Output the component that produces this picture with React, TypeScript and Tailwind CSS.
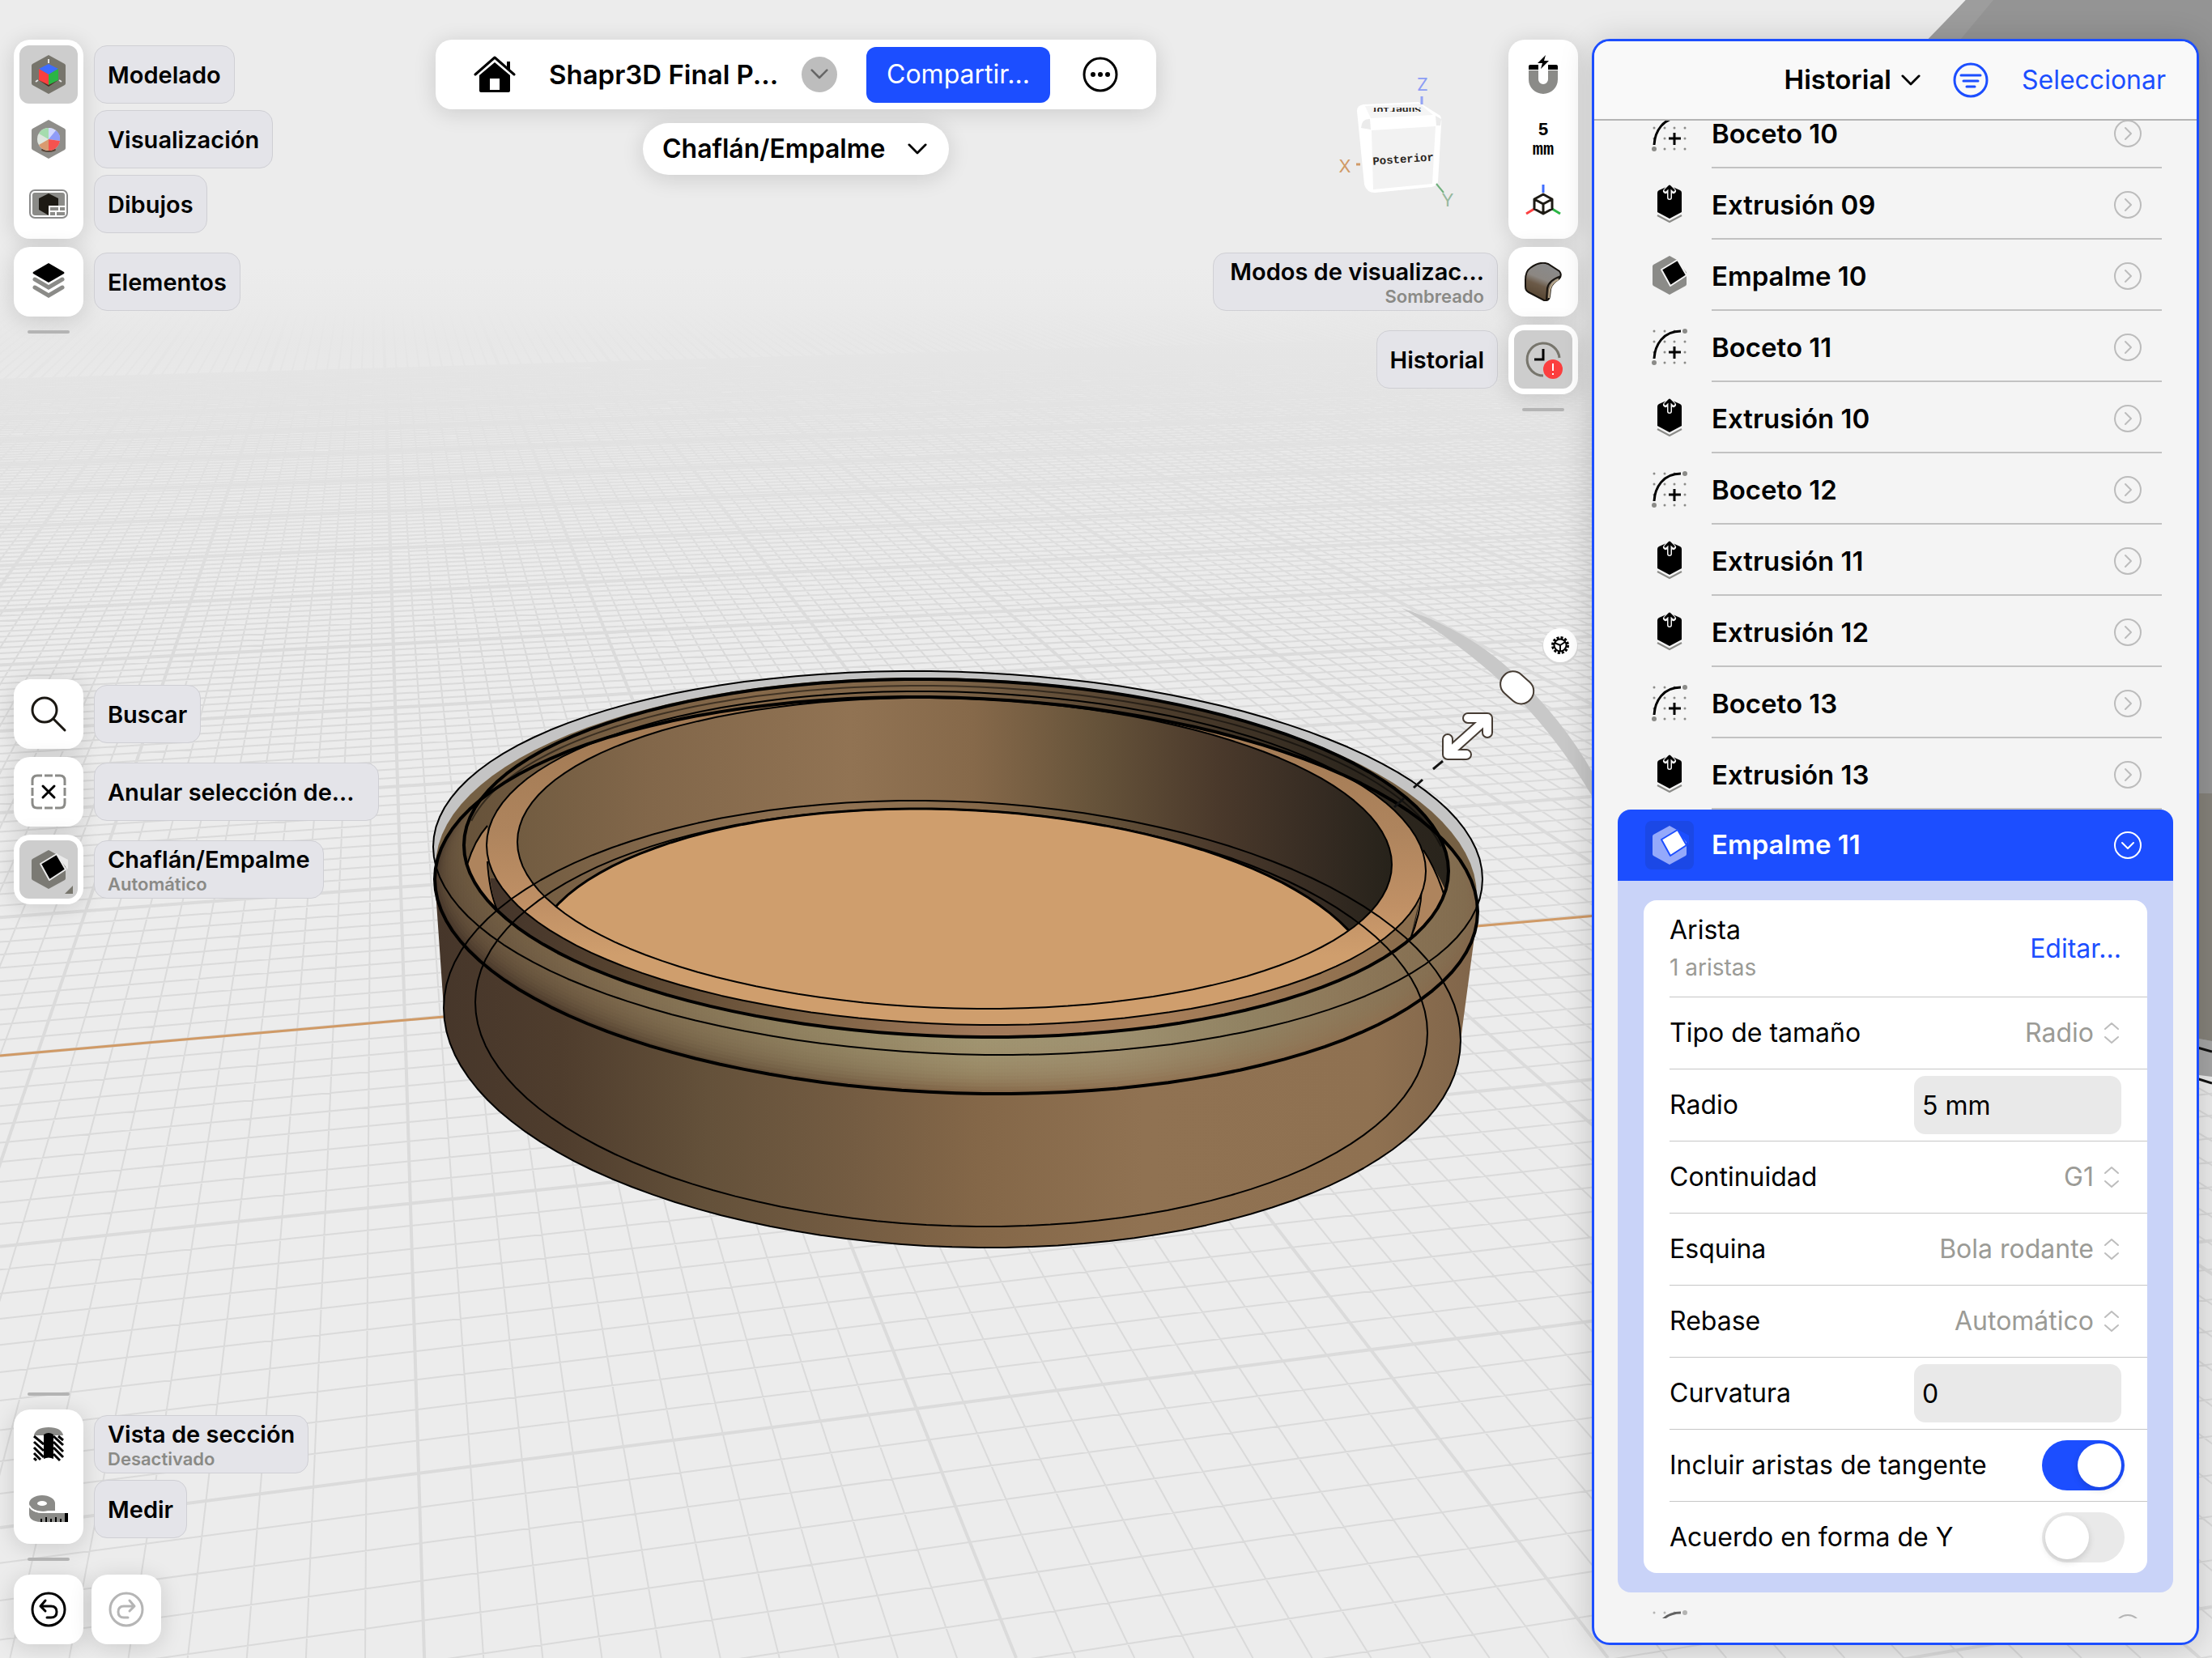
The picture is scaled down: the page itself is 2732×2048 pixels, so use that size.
import React, { useState } from 'react';
import clsx from 'clsx';

/* ---------- ground grid ---------- */

// Two vanishing points and the origin of the ground plane, in canvas units.
const STEEP_VP = { x: 463.5, y: 70 };
const FLAT_VP = { x: 14000, y: 70 };
const ORIGIN = { x: 1131.8, y: 1740 };
const U_STEP = 0.004559;
const V_STEP = 0.02246;
const CANVAS_W = 2732;
const CANVAS_H = 2048;
const FOG_Y = 330;

function steepLine(u: number) {
  const w = 1 + u * U_STEP;
  const px = (ORIGIN.x + u * U_STEP * FLAT_VP.x) / w;
  const py = (ORIGIN.y + u * U_STEP * FLAT_VP.y) / w;
  const at = (y: number) => STEEP_VP.x + ((px - STEEP_VP.x) * (y - STEEP_VP.y)) / (py - STEEP_VP.y);
  return `M${at(FOG_Y).toFixed(1)} ${FOG_Y}L${at(CANVAS_H).toFixed(1)} ${CANVAS_H}`;
}

function flatLine(v: number) {
  const w = 1 + v * V_STEP;
  const px = (ORIGIN.x + v * V_STEP * STEEP_VP.x) / w;
  const py = (ORIGIN.y + v * V_STEP * STEEP_VP.y) / w;
  const slope = (FLAT_VP.y - py) / (FLAT_VP.x - px);
  const at = (x: number) => py + slope * (x - px);
  return `M0 ${at(0).toFixed(1)}L${CANVAS_W} ${at(CANVAS_W).toFixed(1)}`;
}

function range(from: number, to: number) {
  return Array.from({ length: to - from + 1 }, (_, i) => from + i);
}

const minorGrid = [
...range(-170, 260).filter((u) => u % 10 !== 0).map(steepLine),
...range(-18, 150).filter((v) => v % 10 !== 0).map(flatLine)].
join('');
const majorGrid = [
...range(-17, 26).map((u) => steepLine(u * 10)),
...range(-1, 15).map((v) => flatLine(v * 10))].
join('');

/* ---------- model ---------- */

// cx, cy, half width, half height, drop of the rightmost point
type Ring = [number, number, number, number, number];

const TOP_OUTER: Ring = [1183, 1066, 648, 237, 20];
const FILLET_BACK: Ring = [1181, 1088, 643, 251, 18];
const FILLET_LOW: Ring = [1181, 1106, 644, 245, 20];
const FILLET_HIGH: Ring = [1181, 1060, 608, 221, 16];
const LEDGE_OUT: Ring = [1181, 1060, 580, 206, 16];
const LEDGE_IN: Ring = [1179, 1054, 540, 192, 14];
const FLOOR: Ring = [1178, 1206, 522, 207, 18];
const BASE_OUT: Ring = [1176, 1265, 628, 276, 20];
const BASE_IN: Ring = [1175, 1257, 588, 258, 19];

function arc([cx, cy, a, b, s]: Ring, from = 0, to = 360) {
  const r = Math.sqrt(b * b - s * s);
  const steps = 120;
  return Array.from({ length: steps + 1 }, (_, i) => {
    const t = ((from + ((to - from) * i) / steps) * Math.PI) / 180;
    const x = cx + a * Math.cos(t);
    const y = cy + s * Math.cos(t) + r * Math.sin(t);
    return `${x.toFixed(1)} ${y.toFixed(1)}`;
  }).join('L');
}

const ring = (r: Ring) => `M${arc(r)}Z`;

const mix = (a: Ring, b: Ring, t: number) => a.map((n, i) => n + (b[i] - n) * t) as Ring;

const filletSteps = range(1, 14).map((i) => ring(mix(FILLET_LOW, FILLET_HIGH, i / 16)));

function Stops({ list }: {list: [number, string][];}) {
  return (
    <>
      {list.map(([at, color]) =>
      <stop key={at} offset={at} stopColor={color} />
      )}
    </>);

}

function Scene() {
  return (
    <svg
      className="absolute inset-0 h-full w-full"
      viewBox="0 0 2732 2048"
      preserveAspectRatio="xMidYMid slice"
      aria-hidden="true">
      
      <defs>
        <linearGradient id="fog" x1="0" y1="330" x2="0" y2="800" gradientUnits="userSpaceOnUse">
          <stop offset="0" stopColor="#ececec" />
          <stop offset="0.1" stopColor="#eaeaea" />
          <stop offset="0.2" stopColor="#e7e7e7" stopOpacity="0.9" />
          <stop offset="0.45" stopColor="#e8e8e8" stopOpacity="0.5" />
          <stop offset="1" stopColor="#ececec" stopOpacity="0" />
        </linearGradient>
        <linearGradient id="wall" x1="540" x2="1825" y1="0" y2="0" gradientUnits="userSpaceOnUse">
          <Stops list={[[0, '#46362a'], [0.12, '#4f3d2d'], [0.26, '#64513a'], [0.4, '#745c42'], [0.52, '#846748'], [0.68, '#907252'], [0.9, '#8f7151'], [1, '#80654a']]} />
        </linearGradient>
        <linearGradient id="glow" x1="540" x2="1825" y1="0" y2="0" gradientUnits="userSpaceOnUse">
          <Stops list={[[0, '#6a563e'], [0.16, '#806b4e'], [0.35, '#928462'], [0.52, '#a29672'], [0.65, '#a09372'], [0.8, '#918262'], [1, '#7f6d50']]} />
        </linearGradient>
        <linearGradient id="upper" x1="570" x2="1790" y1="0" y2="0" gradientUnits="userSpaceOnUse">
          <Stops list={[[0, '#66523a'], [0.3, '#86694a'], [0.5, '#7c6347'], [0.7, '#4e3e2d'], [0.9, '#2e271e'], [1, '#29241c']]} />
        </linearGradient>
        <linearGradient id="band" x1="600" x2="1770" y1="0" y2="0" gradientUnits="userSpaceOnUse">
          <Stops list={[[0, '#43342a'], [0.15, '#57432f'], [0.35, '#7d6245'], [0.52, '#a0785a'], [0.7, '#a87f5a'], [1, '#876b4b']]} />
        </linearGradient>
        <linearGradient id="ledge" x1="0" x2="0" y1="870" y2="1180" gradientUnits="userSpaceOnUse">
          <Stops list={[[0, '#a07852'], [0.5, '#ae845d'], [0.8, '#c09065'], [1, '#cf9e6d']]} />
        </linearGradient>
        <linearGradient id="inner" x1="640" x2="1720" y1="0" y2="0" gradientUnits="userSpaceOnUse">
          <Stops list={[[0, '#725c41'], [0.15, '#82674a'], [0.38, '#917353'], [0.52, '#86694a'], [0.66, '#66533a'], [0.8, '#4a392b'], [0.92, '#352b22'], [1, '#26221a']]} />
        </linearGradient>
        <clipPath id="inFillet"><path d={ring(FILLET_LOW)} /></clipPath>
        <clipPath id="inTop"><path d={ring(FILLET_HIGH)} /></clipPath>
        <clipPath id="inLedge"><path d={ring(LEDGE_IN)} /></clipPath>
        <clipPath id="front"><path d="M590 1085 H1700 L1756 1100 L1741 1162 V1335 H590Z" /></clipPath>
        <clipPath id="cubeTop"><path d="M1690 133 H1762 V138 H1690Z" /></clipPath>
      </defs>

      <rect width="2732" height="2048" fill="#ececec" />
      <path d={minorGrid} stroke="#dadada" strokeWidth="2" fill="none" />
      <path d={majorGrid} stroke="#dbdbdb" strokeWidth="4" fill="none" />
      <rect y="320" width="2732" height="480" fill="url(#fog)" />
      <rect width="2732" height="330" fill="#ececec" />
      <path d="M0 1304 L548 1256 M1824 1144 L2732 1064" stroke="#d09a66" strokeWidth="3" />

      {/* part behind the history panel */}
      <path d="M2428 0 H2732 V1290 H2600 V60 H2372Z" fill="#949494" />
      <path d="M2428 0 H2462 L2412 60 H2370Z" fill="#9d9d9d" />
      <path d="M2700 980 H2732 V1286 L2700 1280Z" fill="#85827a" />
      <path d="M2700 1280 L2732 1286 V1330 L2700 1326Z" fill="#a5a5a5" />
      <path d="M2700 1290 L2732 1299 M2700 1328 L2732 1338" stroke="#111" strokeWidth="3" />

      {/* side wall */}
      <path d={`M1825 1127 L${arc(BASE_OUT, 0, 180)} L537 1086 Z`} fill="url(#wall)" />
      <path d={ring(TOP_OUTER)} fill="#c4c4c4" />
      <path d={ring(FILLET_BACK)} fill="#756044" />
      <path d={ring(FILLET_LOW)} fill="url(#wall)" />
      {filletSteps.map((d, i) =>
      <path key={i} d={d} fill="url(#glow)" opacity="0.18" />
      )}

      {/* recess */}
      <path d={ring(FILLET_HIGH)} fill="url(#upper)" />
      <g clipPath="url(#inTop)">
        <path d={ring(FILLET_HIGH)} fill="url(#band)" clipPath="url(#front)" />
        <path d="M577 1068 Q586 1038 602 1020 Q600 1080 614 1124 Q590 1100 577 1068Z" fill="#ae845d" />
        <path d="M1758 1050 Q1776 1078 1790 1110 L1741 1164 Q1756 1120 1758 1050Z" fill="#ae845d" />
        <path d="M577 1068 Q586 1038 602 1020 M1758 1050 Q1774 1075 1783 1104 M602 1064 Q604 1100 614 1124 M1756 1096 Q1755 1130 1741 1162" stroke="#000" strokeWidth="2" fill="none" />
      </g>
      <g clipPath="url(#inFillet)">
        <path d={ring(LEDGE_OUT)} fill="url(#ledge)" />
        <path d={ring(LEDGE_IN)} fill="url(#inner)" />
      </g>
      <g clipPath="url(#inLedge)">
        <path d={ring(FLOOR)} fill="#cf9e6d" stroke="#000" strokeWidth="3" />
      </g>

      {/* edges */}
      <g fill="none" stroke="#000" strokeLinejoin="round">
        <path d={ring(TOP_OUTER)} strokeWidth="2" />
        <path d={ring(FILLET_LOW)} strokeWidth="4" />
        <path d={ring(FILLET_HIGH)} strokeWidth="4" />
        <path d={`M${arc(FILLET_HIGH, 190, 350)}`} strokeWidth="2" transform="translate(0 8)" opacity="0.5" />
        <path d={ring(LEDGE_OUT)} strokeWidth="2" />
        <path d={ring(LEDGE_IN)} strokeWidth="2" />
        <path d={ring(BASE_OUT)} strokeWidth="2" />
        <path d={ring(BASE_IN)} strokeWidth="2" />
      </g>

      {/* radius manipulator */}
      <path
        d="M1731 751 Q1812 778 1866 828 Q1930 888 1968 956 V986 Q1918 902 1854 842 Q1796 790 1731 751Z"
        fill="#c8c8c8" />
      
      <path d="M1782 940 L1770 950 M1757 963 L1746 973 M1734 986 L1722 997" stroke="#111" strokeWidth="3" />
      <g fill="none" strokeLinecap="round" strokeLinejoin="round">
        <path d="M1813 887 H1837 V905 M1836 888 L1788 931 M1788 913 V932 H1811" stroke="#463c33" strokeWidth="14" />
        <path d="M1813 887 H1837 V905 M1836 888 L1788 931 M1788 913 V932 H1811" stroke="#fff" strokeWidth="10" />
      </g>
      <rect x="1852" y="834" width="44" height="31" rx="15" transform="rotate(42 1874 849)" fill="#fff" stroke="#463c33" strokeWidth="2" />
      <circle cx="1927" cy="799" r="22" fill="#d8d8d8" />
      <circle cx="1927" cy="797" r="21" fill="#fff" />
      <g fill="none" stroke="#000">
        <circle cx="1927" cy="797" r="9.5" strokeWidth="3" strokeDasharray="3 2" />
        <circle cx="1927" cy="797" r="7.5" strokeWidth="2" />
        <path d="M1927 797 L1920 794 M1927 797 L1933 793 M1927 797 L1927 804" strokeWidth="2" />
      </g>

      {/* orientation cube */}
      <path d="M1676 137 Q1676 130 1684 129 L1752 126 L1779 143 Q1781 147 1780 155 L1776 225 Q1774 230 1768 231 L1698 238 Q1688 238 1685 228Z" fill="#fff" />
      <path d="M1694 161 L1773 156 L1769 227 L1696 234Z" fill="#f2f2f2" />
      <path d="M1686 131 L1753 128 L1770 142 L1693 146Z" fill="#f5f5f5" />
      <path d="M1681 158 Q1682 146 1692 147 L1693 160Z M1773 143 L1780 147 L1779 155 H1774Z" fill="#ebebeb" />
      <path d="M1756 119 V129" stroke="#93a3f5" strokeWidth="3" />
      <path d="M1675 203 H1680" stroke="#d09a66" strokeWidth="3" />
      <path d="M1774 227 L1783 238" stroke="#6fb07c" strokeWidth="2" />
      <g className="font-[Inter,sans-serif]" fontSize="22" textAnchor="middle">
        <text x="1757" y="112" fill="#8c9df5">Z</text>
        <text x="1661" y="213" fill="#d09a66">X</text>
        <text x="1788" y="255" fill="#96b89c">Y</text>
      </g>
      <g className="font-['Liberation_Mono',monospace] font-bold" textAnchor="middle" fill="#2b2622">
        <text x="1733" y="201" fontSize="14" transform="rotate(-4 1733 196)">Posterior</text>
        <g clipPath="url(#cubeTop)">
          <text x="1724" y="140" fontSize="13" transform="rotate(178 1724 136)">Superior</text>
        </g>
      </g>
    </svg>);

}

/* ---------- icons ---------- */

type IconProps = {children: React.ReactNode;box?: string;className?: string;};

function Icon({ children, box = '0 0 48 48', className = 'size-12' }: IconProps) {
  return (
    <svg viewBox={box} className={className} fill="none" aria-hidden="true">
      {children}
    </svg>);

}

const HEX = 'M24 0 L44 11 Q45 12 45 13 V35 Q45 36 44 37 L24 48 L4 37 Q3 36 3 35 V13 Q3 12 4 11Z';

const ModelIcon = () =>
<Icon>
    <path d={HEX} fill="#77756c" />
    <path d="M12 31 L24 39 L36 31 L30 26 H18Z" fill="#4a2c22" />
    <path d="M24 11 L36 17 L24 24 L12 17Z" fill="#3f6dff" />
    <path d="M12 17 L24 24 V37 L12 31Z" fill="#fb3f3f" />
    <path d="M36 17 L24 24 V37 L36 31Z" fill="#2bb545" />
    <path d="M24 5 V10 M11 31 L8 33 M37 31 L40 33" stroke="#e3e3e3" strokeWidth="2" />
  </Icon>;


const VisualIcon = () =>
<Icon>
    <path d={HEX} fill="#8f8e8a" />
    <ellipse cx="24" cy="37" rx="9" ry="3" fill="#5a4436" />
    <circle cx="24" cy="24" r="14" fill="#dfe6df" />
    <path d="M24 24 L12 17 A14 14 0 0 1 24 10Z" fill="#a5dcae" />
    <path d="M24 24 V10 A14 14 0 0 1 33 13Z" fill="#d3d9ff" />
    <path d="M24 24 L33 13 A14 14 0 0 1 38 26Z" fill="#8f9cf8" />
    <path d="M24 24 L38 26 A14 14 0 0 1 24 38Z" fill="#f5534f" />
    <path d="M24 24 V38 A14 14 0 0 1 12 31Z" fill="#d99a70" />
  </Icon>;


const DrawingIcon = () =>
<Icon>
    <rect x="1" y="7" width="46" height="34" rx="6" stroke="#8b8b8b" strokeWidth="2" />
    <rect x="4" y="10" width="40" height="28" rx="3" fill="#8b8b88" />
    <path d="M24 11 L36 17 V31 L24 38 L12 31 V17Z" fill="#1d1a14" />
    <path d="M24 26 H44 V38 H24Z" fill="#fff" />
    <path d="M26 28 H36 V32 H26Z M38 28 H44 V32 H38Z M26 34 H32 V38 H26Z M34 34 H44 V38 H34Z" fill="#8b8b88" />
  </Icon>;


const LayersIcon = () =>
<Icon>
    <path d="M24 1 L43 12 Q44 13 43 14 L24 25 L5 14 Q4 13 5 12Z" fill="#000" />
    <path d="M7 21 L24 31 L41 21 M7 31 L24 41 L41 31" stroke="#8b8b88" strokeWidth="5" strokeLinecap="round" />
  </Icon>;


const SearchIcon = () =>
<Icon>
    <circle cx="19" cy="19" r="15" stroke="#1a1712" strokeWidth="3" />
    <path d="M30 30 L44 44" stroke="#1a1712" strokeWidth="3" strokeLinecap="round" />
  </Icon>;


const DeselectIcon = () =>
<Icon>
    <path d="M4 16 V10 Q4 4 10 4 H16 M19 4 H29 M32 4 H38 Q44 4 44 10 V16 M44 19 V29 M44 32 V38 Q44 44 38 44 H32 M29 44 H19 M16 44 H10 Q4 44 4 38 V32 M4 29 V19" stroke="#8b8b88" strokeWidth="3" />
    <path d="M17 17 L31 31 M31 17 L17 31" stroke="#000" strokeWidth="3" strokeLinecap="round" />
  </Icon>;


function FilletIcon({ hex = '#7b7a74', face = '#000', edge = '#e9e9e9', className = 'size-12' }) {
  return (
    <Icon className={className}>
      <path d={HEX} fill={hex} />
      <path d="M33 4 L48 12 V24 L38 12Z" fill={edge} />
      <path d="M14 17 L34 5 L45 24 L25 37Z" fill={face} stroke={edge} strokeWidth="2" strokeLinejoin="round" />
    </Icon>);

}

const SectionIcon = () =>
<Icon>
    <path d="M6 13 Q8 3 24 3 Q40 3 42 13Z" fill="#8b8b88" />
    <path d="M18 12 Q24 8 30 12 V42 Q24 39 18 42Z" fill="#000" />
    <path d="M6 14 L18 24 M6 21 L18 32 M6 28 L18 40 M6 35 L14 43 M6 41 L9 44 M30 14 L42 25 M30 21 L42 33 M30 28 L42 40 M30 36 L38 44 M36 14 L42 19" stroke="#000" strokeWidth="3" />
  </Icon>;


const MeasureIcon = () =>
<Icon>
    <ellipse cx="16" cy="17" rx="16" ry="10" fill="#8b8b88" />
    <path d="M16 17 H32 V26 H16Z" fill="#8b8b88" />
    <ellipse cx="16" cy="17" rx="6" ry="3" fill="#fff" />
    <path d="M0 20 Q3 29 18 29 H48 V40 H14 Q0 39 0 30Z" fill="#8b8b88" />
    <path d="M0 20 Q4 28 18 28 H33" stroke="#fff" strokeWidth="2" />
    <path d="M15 36 V40 M21 34 V40 M27 36 V40 M33 34 V40 M39 36 V40" stroke="#000" strokeWidth="2" />
    <path d="M44 29 H48 V40 H44Z" fill="#000" />
  </Icon>;


const UndoIcon = ({ flip = false, color = '#000' }) =>
<Icon>
    <g stroke={color} strokeLinecap="round" strokeLinejoin="round" transform={flip ? 'matrix(-1 0 0 1 48 0)' : undefined}>
      <circle cx="24" cy="24" r="20" strokeWidth="3" />
      <path d="M20 13 L14 20 L20 26 M14 20 H27 Q34 20 34 27 Q34 34 27 34 H22" strokeWidth="3" />
    </g>
  </Icon>;


const MagnetIcon = () =>
<Icon>
    <path d="M6 18 V14 Q6 12 8 12 H18 V18Z M30 18 V12 H40 Q42 12 42 14 V18Z" fill="#000" />
    <path d="M6 19 V30 A18 18 0 0 0 42 30 V19 H30 V30 A6 6 0 0 1 18 30 V19Z" fill="#8b8b88" />
    <path d="M27 0 L17 10 H23 L21 17 L31 7 H25Z" fill="#000" />
  </Icon>;


const AxesIcon = () =>
<Icon>
    <path d="M24 0 V10" stroke="#3f6dff" strokeWidth="3" />
    <path d="M13 30 L3 36" stroke="#fb3f3f" strokeWidth="3" />
    <path d="M35 30 L45 36" stroke="#2bb545" strokeWidth="3" />
    <path d="M24 12 L35 18 V30 L24 36 L13 30 V18Z M13 18 L24 24 L35 18 M24 24 V36" stroke="#1d1a14" strokeWidth="3" strokeLinejoin="round" />
  </Icon>;


const ShadingIcon = () =>
<Icon>
    <defs>
      <linearGradient id="shade" x1="28" y1="4" x2="12" y2="44" gradientUnits="userSpaceOnUse">
        <Stops list={[[0, '#8a8a8a'], [0.4, '#8c8782'], [0.6, '#6b5a48'], [1, '#54432f']]} />
      </linearGradient>
    </defs>
    <path d="M2 22 Q2 11 8 7 Q20 -2 30 2 L44 11 Q48 16 43 21 Q34 27 33 33 L32 42 Q31 48 25 47 L6 37 Q2 35 2 30Z" fill="url(#shade)" stroke="#17130e" strokeWidth="2" />
    <path d="M46 17 Q31 22 29 32 L28 46" stroke="#17130e" strokeWidth="2" />
    <path d="M43 21 Q34 25 32 34 L31 44" stroke="#b9a88c" strokeWidth="2" />
  </Icon>;


const HistoryIcon = () =>
<Icon>
    <path d="M24 44 A20 20 0 1 1 44 22" stroke="#77756c" strokeWidth="3" />
    <path d="M24 11 V24 H13" stroke="#000" strokeWidth="3" />
    <circle cx="36" cy="36" r="12" fill="#fb3f3f" />
    <path d="M36 29 V38 M36 41 V43" stroke="#fff" strokeWidth="2" />
  </Icon>;


const HomeIcon = () =>
<Icon box="0 0 52 48" className="h-12 w-13">
    <path d="M2 24 L26 3 L50 24" stroke="#000" strokeWidth="3" strokeLinecap="round" strokeLinejoin="round" />
    <path d="M41 8 H45 V19 L41 16Z" fill="#000" />
    <path d="M26 9 L45 25 V44 Q45 46 43 46 H32 V29 H20 V46 H9 Q7 46 7 44 V25Z" fill="#000" />
    <path d="M20 29 H32 V43 H20Z" fill="#fff" />
    <path d="M20 43 H32 V46 H20Z" fill="#000" />
  </Icon>;


function Chevron({ className }: {className: string;}) {
  return (
    <svg viewBox="0 0 26 16" className={className} fill="none" aria-hidden="true">
      <path d="M2 2 L13 13 L24 2" stroke="currentColor" strokeWidth="3" strokeLinecap="round" strokeLinejoin="round" />
    </svg>);

}

const SketchIcon = () =>
<Icon box="0 0 44 48" className="h-12 w-11">
    {[5, 18, 31, 44].map((y) =>
  [3, 16, 28, 41].map((x) => <circle key={`${x}-${y}`} cx={x} cy={y} r="1.5" fill="#8b8b88" />)
  )}
    <path d="M3 39 C4 22 14 5 36 5" stroke="#000" strokeWidth="3" />
    <circle cx="41" cy="5" r="3" fill="#8b8b88" />
    <circle cx="3" cy="44" r="3" fill="#8b8b88" />
    <path d="M28 24 V39 M21 31 H36" stroke="#000" strokeWidth="3" />
  </Icon>;


const ExtrudeIcon = () =>
<Icon box="0 0 44 48" className="h-12 w-11">
    <path d="M7 10 Q7 8 9 7 L18 3 H26 L35 7 Q37 8 37 10 V34 L22 42 L7 34Z" fill="#000" />
    <path d="M7 38 L22 46 L37 38" stroke="#8b8b88" strokeWidth="2" />
    <path d="M22 3 V16 M17 8 L22 2 L27 8" stroke="#f4f4f4" strokeWidth="6" strokeLinecap="round" strokeLinejoin="round" />
    <path d="M22 2 V16 M17 7 L22 2 L27 7" stroke="#000" strokeWidth="3" strokeLinecap="round" strokeLinejoin="round" />
  </Icon>;


function RoundChevron({ down = false, className }: {down?: boolean;className: string;}) {
  return (
    <svg viewBox="0 0 36 36" className={clsx('size-9', className)} fill="none" stroke="currentColor" aria-hidden="true">
      <circle cx="18" cy="18" r="16" strokeWidth="2" />
      <path d={down ? 'M11 15 L18 22 L25 15' : 'M15 11 L22 18 L15 25'} strokeWidth="2" strokeLinecap="round" strokeLinejoin="round" />
    </svg>);

}

/* ---------- toolbars ---------- */

type Tool = {
  name: string;
  icon: React.ReactNode;
  note?: string;
  active?: boolean;
  corner?: boolean;
  tag?: string;
  noTag?: boolean;
};

function ToolGroup({ tools, side = 'left' }: {tools: Tool[];side?: 'left' | 'right';}) {
  return (
    <div className={clsx('flex gap-[13px]', side === 'right' && 'flex-row-reverse')}>
      <div className="flex flex-col gap-2 rounded-[20px] bg-white p-[7px] shadow-[0_4px_28px_rgba(0,0,0,0.14)]">
        {tools.map((tool) =>
        <button
          key={tool.name}
          aria-label={tool.name}
          className={clsx('relative grid size-[72px] place-items-center rounded-xl', tool.active && 'bg-[#cdcdcd]')}>
          
            {tool.icon}
            {tool.corner &&
          <svg viewBox="0 0 10 10" className="absolute right-1.5 bottom-1.5 size-2.5" aria-hidden="true">
                <path d="M10 0 V10 H0Z" fill="#77756c" />
              </svg>
          }
          </button>
        )}
      </div>
      <div className={clsx('flex flex-col gap-2 py-[7px]', side === 'right' ? 'items-end text-right' : 'items-start')}>
        {tools.map((tool) => tool.noTag ? null :
        <div
          key={tool.name}
          className={clsx(
            'flex h-[72px] flex-col justify-center rounded-2xl border border-[#cfcfd4] bg-[#e4e4e9] px-4 pt-0.5 whitespace-nowrap',
            tool.tag
          )}>
          
            <span className="text-[29px] leading-[34px] font-semibold">{tool.name}</span>
            {tool.note && <span className="text-[22px] leading-[26px] font-semibold text-[#8a8a86]">{tool.note}</span>}
          </div>
        )}
      </div>
    </div>);

}

const Grip = () => <div className="mx-[17px] h-1 w-[52px] rounded-full bg-[#b4b4b4]" />;

function LeftTools() {
  return (
    <div className="flex flex-col gap-2.5">
      <ToolGroup
        tools={[
        { name: 'Modelado', icon: <ModelIcon />, active: true },
        { name: 'Visualización', icon: <VisualIcon /> },
        { name: 'Dibujos', icon: <DrawingIcon /> }]
        } />
      
      <ToolGroup tools={[{ name: 'Elementos', icon: <LayersIcon /> }]} />
      <div className="mt-[7px]"><Grip /></div>

      <div className="mt-[417px] flex flex-col gap-2.5">
        <ToolGroup tools={[{ name: 'Buscar', icon: <SearchIcon /> }]} />
        <ToolGroup tools={[{ name: 'Anular selección de...', icon: <DeselectIcon />, tag: 'w-[352px]' }]} />
        <ToolGroup
          tools={[{ name: 'Chaflán/Empalme', note: 'Automático', icon: <FilletIcon />, active: true, corner: true }]} />
        
      </div>

      <div className="mt-auto flex flex-col gap-[17px]">
        <Grip />
        <ToolGroup
          tools={[
          { name: 'Vista de sección', note: 'Desactivado', icon: <SectionIcon /> },
          { name: 'Medir', icon: <MeasureIcon /> }]
          } />
        
        <Grip />
        <div className="flex gap-2.5">
          <button aria-label="Deshacer" className="grid size-[86px] place-items-center rounded-[20px] bg-white shadow-[0_4px_28px_rgba(0,0,0,0.14)]">
            <UndoIcon />
          </button>
          <button aria-label="Rehacer" className="grid size-[86px] place-items-center rounded-[20px] bg-white shadow-[0_4px_28px_rgba(0,0,0,0.14)]">
            <UndoIcon flip color="#b5b5b5" />
          </button>
        </div>
      </div>
    </div>);

}

function RightTools() {
  return (
    <div className="flex flex-col items-end gap-2.5">
      <ToolGroup
        side="right"
        tools={[
        { name: 'Imán', icon: <MagnetIcon />, noTag: true },
        {
          name: 'Paso',
          noTag: true,
          icon:
          <span className="pt-1 text-center font-['Liberation_Mono',monospace] text-[22px] leading-6 font-bold">
                5<br />mm
              </span>

        },
        { name: 'Ejes', icon: <AxesIcon />, noTag: true }]
        } />
      
      <ToolGroup
        side="right"
        tools={[{ name: 'Modos de visualizac...', note: 'Sombreado', icon: <ShadingIcon />, tag: 'w-[352px]' }]} />
      
      <ToolGroup side="right" tools={[{ name: 'Historial', icon: <HistoryIcon />, active: true }]} />
      <div className="mt-[7px]"><Grip /></div>
    </div>);

}

function TopBar() {
  return (
    <header className="flex flex-col items-center gap-[17px]">
      <div className="flex h-[86px] w-[890px] items-center rounded-[20px] bg-white pr-[47px] pl-[47px] shadow-[0_4px_28px_rgba(0,0,0,0.14)]">
        <button aria-label="Inicio"><HomeIcon /></button>
        <h1 className="ml-[41px] text-[33px] leading-10 font-semibold whitespace-nowrap">Shapr3D Final P...</h1>
        <button aria-label="Opciones del diseño" className="ml-auto grid size-11 place-items-center rounded-full bg-[#bdbdbd] text-[#666]">
          <Chevron className="w-[22px]" />
        </button>
        <button className="ml-9 h-[69px] w-[227px] rounded-xl bg-[#1c4eff] text-[32px] text-white">Compartir...</button>
        <button aria-label="Más" className="ml-10">
          <Icon className="size-11" box="0 0 44 44">
            <circle cx="22" cy="22" r="20" stroke="#000" strokeWidth="3" />
            <circle cx="13" cy="22" r="3" fill="#000" />
            <circle cx="22" cy="22" r="3" fill="#000" />
            <circle cx="31" cy="22" r="3" fill="#000" />
          </Icon>
        </button>
      </div>
      <button className="flex h-16 w-[378px] items-center justify-between rounded-full bg-white pr-[27px] pl-6 text-[32px] font-semibold shadow-[0_4px_28px_rgba(0,0,0,0.14)]">
        Chaflán/Empalme
        <Chevron className="w-6" />
      </button>
    </header>);

}

/* ---------- history panel ---------- */

const steps = [
'Boceto 10',
'Extrusión 09',
'Empalme 10',
'Boceto 11',
'Extrusión 10',
'Boceto 12',
'Extrusión 11',
'Extrusión 12',
'Boceto 13',
'Extrusión 13'];


function StepIcon({ name }: {name: string;}) {
  if (name.startsWith('Boceto')) return <SketchIcon />;
  if (name.startsWith('Extrusión')) return <ExtrudeIcon />;
  return <FilletIcon hex="#8b8b88" edge="#f4f4f4" />;
}

function StepRow({ name }: {name: string;}) {
  return (
    <li className="flex h-[88px] items-center pr-[43px] pl-[63px]">
      <span className="grid w-[60px] place-items-center"><StepIcon name={name} /></span>
      <button className="ml-[22px] flex h-full flex-1 items-center justify-between border-b-2 border-[#c2c2c2] pt-1 pr-6 text-left text-[33px] leading-8 font-semibold">
        {name}
        <RoundChevron className="text-[#bcbcbc]" />
      </button>
    </li>);

}

function Field({ id, label, last = false, children }: {id: string;label: string;last?: boolean;children: React.ReactNode;}) {
  return (
    <div className={clsx('flex items-center justify-between border-[#c6c6c6] pr-8', last ? 'h-[88px]' : 'h-[89px] border-b')}>
      <label htmlFor={id} className="text-[32px]">{label}</label>
      {children}
    </div>);

}

function SelectBox({ id, value }: {id: string;value: string;}) {
  return (
    <div className="flex items-center gap-3 pr-0.5 text-[#9b9b96]">
      <select id={id} defaultValue={value} className="field-sizing-content appearance-none bg-transparent text-right text-[32px] outline-none">
        <option>{value}</option>
      </select>
      <svg viewBox="0 0 20 28" className="h-7 w-5 text-[#bdbdbd]" fill="none" aria-hidden="true">
        <path d="M2 9 L10 2 L18 9 M2 19 L10 26 L18 19" stroke="currentColor" strokeWidth="2" strokeLinecap="round" strokeLinejoin="round" />
      </svg>
    </div>);

}

function TextBox({ id, value }: {id: string;value: string;}) {
  const [text, setText] = useState(value);
  return (
    <input
      id={id}
      value={text}
      onChange={(e) => setText(e.target.value)}
      className="h-[72px] w-64 rounded-[14px] bg-[#e9e9e9] px-2.5 text-[32px] outline-none" />);


}

function Toggle({ id, on }: {id: string;on: boolean;}) {
  const [checked, setChecked] = useState(on);
  return (
    <input
      id={id}
      type="checkbox"
      role="switch"
      checked={checked}
      onChange={(e) => setChecked(e.target.checked)}
      className="-mr-1 flex h-[62px] w-[102px] appearance-none rounded-full bg-[#e9e9e9] p-1 before:size-[54px] before:rounded-full before:bg-white before:shadow-[0_3px_8px_rgba(0,0,0,0.15)] checked:justify-end checked:bg-[#1c4eff]" />);


}

function ActiveStep() {
  return (
    <li className="mx-[29px] overflow-hidden rounded-2xl bg-[#c9d3f8]">
      <button className="flex h-[88px] w-full items-center bg-[#1c4eff] pr-[38px] pl-[34px] text-left text-[33px] font-semibold text-white">
        <span className="grid size-[60px] place-items-center rounded-lg bg-[#1b48e6]">
          <FilletIcon hex="#94a9fb" face="#fff" edge="#1c4eff" />
        </span>
        <span className="ml-[22px] flex-1">Empalme 11</span>
        <RoundChevron down className="text-white" />
      </button>
      <div className="mx-8 mt-6 mb-6 rounded-2xl bg-white pl-8">
        <div className="flex h-[120px] items-center justify-between border-b border-[#c6c6c6] pr-8">
          <div>
            <p className="text-[32px] leading-10">Arista</p>
            <p className="mt-1.5 text-[28px] leading-10 text-[#9b9b96]">1 aristas</p>
          </div>
          <button className="text-[32px] text-[#1c4eff]">Editar...</button>
        </div>
        <Field id="size-type" label="Tipo de tamaño"><SelectBox id="size-type" value="Radio" /></Field>
        <Field id="radius" label="Radio"><TextBox id="radius" value="5 mm" /></Field>
        <Field id="continuity" label="Continuidad"><SelectBox id="continuity" value="G1" /></Field>
        <Field id="corner" label="Esquina"><SelectBox id="corner" value="Bola rodante" /></Field>
        <Field id="overflow" label="Rebase"><SelectBox id="overflow" value="Automático" /></Field>
        <Field id="curvature" label="Curvatura"><TextBox id="curvature" value="0" /></Field>
        <Field id="tangent" label="Incluir aristas de tangente"><Toggle id="tangent" on /></Field>
        <Field id="y-blend" label="Acuerdo en forma de Y" last><Toggle id="y-blend" on={false} /></Field>
      </div>
    </li>);

}

function HistoryPanel() {
  return (
    <aside className="relative mt-12 mr-4 mb-4 flex w-[750px] shrink-0 flex-col overflow-hidden rounded-[22px] border-[3px] border-[#1c4eff] bg-[#f4f4f4] pb-[30px] shadow-[0_4px_40px_rgba(0,0,0,0.18)]">
      <div className="flex h-[98px] shrink-0 items-center justify-end border-b-2 border-[#b5b5b5] bg-[#f9f9f9] pr-[38px]">
        <button className="flex items-center gap-3 text-[33px] font-semibold">
          Historial
          <Chevron className="w-6" />
        </button>
        <button aria-label="Filtrar" className="ml-[39px]">
          <Icon className="size-[46px]" box="0 0 46 46">
            <circle cx="23" cy="23" r="20" stroke="#1c4eff" strokeWidth="3" />
            <path d="M11 17 H35 M14 24 H32 M18 31 H28" stroke="#1c4eff" strokeWidth="3" strokeLinecap="round" />
          </Icon>
        </button>
        <button className="ml-10 text-[32px] text-[#1c4eff]">Seleccionar</button>
      </div>
      <div className="min-h-0 flex-1 overflow-hidden">
        <ul className="-mt-[29px]">
          {steps.map((name) => <StepRow key={name} name={name} />)}
          <ActiveStep />
          <li className="flex h-[88px] items-center justify-between pr-[67px] pl-[71px] opacity-60">
            <SketchIcon />
            <RoundChevron className="text-[#8b8b8b]" />
          </li>
        </ul>
      </div>
    </aside>);

}

export default function App() {
  return (
    <div className="relative flex h-screen overflow-hidden bg-[#ececec] font-[Inter,sans-serif] text-black">
      <Scene />
      <main className="relative grid min-w-0 flex-1 grid-cols-[1fr_auto_1fr] px-[17px] pt-[49px] pb-[17px]">
        <LeftTools />
        <TopBar />
        <RightTools />
      </main>
      <HistoryPanel />
    </div>);

}
